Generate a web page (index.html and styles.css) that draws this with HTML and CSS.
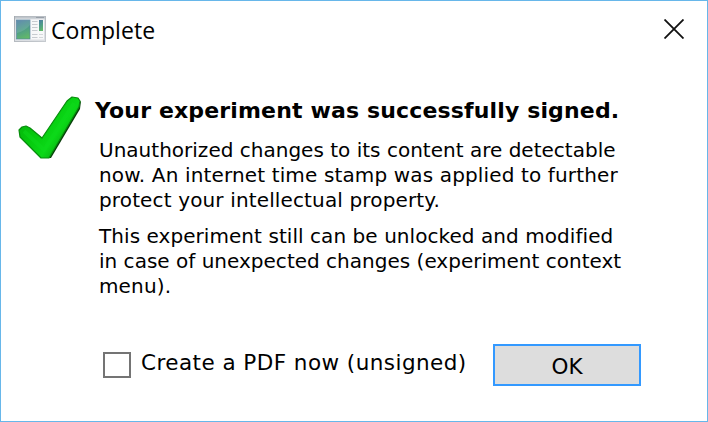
FILE: index.html
```html
<!DOCTYPE html>
<html lang="en">
<head>
<meta charset="utf-8">
<title>Complete</title>
<link rel="stylesheet" href="styles.css">
</head>
<body>
<main class="dialog">
  <header class="titlebar">
    <svg class="app-icon" viewBox="0 0 32 26" aria-hidden="true">
      <defs>
        <linearGradient id="frame" x1="0" y1="0" x2="1" y2="1"><stop offset="0" stop-color="#a4aab0"/><stop offset="1" stop-color="#c6cacf"/></linearGradient>
        <linearGradient id="pane" x1="0.3" y1="0" x2="0.6" y2="1"><stop offset="0" stop-color="#4c7fa0"/><stop offset="0.5" stop-color="#4f9d88"/><stop offset="1" stop-color="#62b968"/></linearGradient>
      </defs>
      <rect x="0.5" y="0.5" width="31" height="25" fill="#dcdfe3" stroke="url(#frame)"/>
      <path d="M1 1.5H31" stroke="#bfc5cb" stroke-width="2"/>
      <path d="M22 1.5H30" stroke="#989fa8"/>
      <rect x="2" y="3.500" width="28" height="20" fill="#f7f8f9"/>
      <rect x="2.500" y="4" width="13.500" height="19" fill="url(#pane)" stroke="#5785a0" stroke-width="0.700"/>
      <path d="M3 17Q11 15 16 9V4H3Z" fill="#fff" opacity="0.120"/>
      <path d="M18 5.500H23.500M18 8.500H23.500M18 11.500H23.500M18 14.500H23.500M18 18.500H23.500M18 21.500H23.500" stroke="#c7cbd0"/>
      <rect x="25" y="4" width="4" height="11" fill="url(#pane)"/>
      <path d="M25 18.500H29M25 21.500H29" stroke="#d5d8db"/>
    </svg>
    <h1 class="caption">Complete</h1>
    <svg class="close" viewBox="0 0 20 20" role="img" aria-label="Close"><path d="M0.500 0.500L19.500 19.500M19.500 0.500L0.500 19.500" stroke="#111" stroke-width="1.800"/></svg>
  </header>
  <section class="content">
    <svg class="check" viewBox="0 0 64 64" aria-hidden="true">
      <defs><linearGradient id="green" x1="0" y1="0" x2="1" y2="0.700"><stop offset="0" stop-color="#07a60b"/><stop offset="0.450" stop-color="#05c90d"/><stop offset="0.700" stop-color="#0bd817"/><stop offset="1" stop-color="#078f0d"/></linearGradient></defs>
      <path d="M63 5L62 13L33 62H28L60 7Z" fill="#063d08"/>
      <path d="M1 34L4 31L8 30L12 32L24 42L49 5L54 1L60 2L62 5L61 11L31 62H23L2 41Z" fill="url(#green)" stroke="#078d0c" stroke-width="1.200" stroke-linejoin="round"/>
      <path d="M6 35L26 54L56 7" fill="none" stroke="#10dd1d" stroke-width="4" stroke-linejoin="round" opacity="0.400"/>
    </svg>
    <div class="message">
      <h2 class="heading">Your experiment was successfully signed.</h2>
      <p class="paragraph">
        <span class="line">Unauthorized changes to its content are detectable</span>
        <span class="line wide">now. An internet time stamp was applied to further</span>
        <span class="line wide">protect your intellectual property.</span>
      </p>
      <p class="paragraph">
        <span class="line medium">This experiment still can be unlocked and modified</span>
        <span class="line">in case of unexpected changes (experiment context</span>
        <span class="line wide">menu).</span>
      </p>
    </div>
  </section>
  <footer class="actions">
    <label class="option"><input class="box" type="checkbox"><span class="option-text">Create a PDF now (unsigned)</span></label>
    <button class="ok" type="button">OK</button>
  </footer>
</main>
</body>
</html>
```
FILE: styles.css
```css
* { box-sizing: border-box; }
body { margin: 0; background: #fff; color: #000; font-family: "DejaVu Sans", Verdana, sans-serif; }
.dialog { width: 708px; height: 422px; border: 1px solid #67b7ea; display: flex; flex-direction: column; }
.titlebar { height: 59px; padding: 0 23px 0 13px; display: flex; align-items: center; }
.app-icon { width: 32px; height: 26px; margin-top: -4px; }
.caption { margin: -2px auto 0 5px; font: 400 23px/30px "Open Sans", sans-serif; letter-spacing: 0.1px; }
.close { width: 20px; height: 20px; margin-top: -3px; }
.content { height: 281px; padding: 36px 0 0 17px; display: flex; align-items: flex-start; }
.check { width: 64px; height: 64px; flex: none; }
.message { margin-left: 13px; white-space: nowrap; }
.heading { margin: 0 0 12px; font-size: 22px; line-height: 30px; font-weight: 700; letter-spacing: 0.15px; }
.paragraph { margin: 0 0 11px 4px; font-size: 20px; line-height: 25px; font-variant-ligatures: none; }
.line { display: block; letter-spacing: 0.01px; }
.medium { letter-spacing: 0.06px; }
.wide { letter-spacing: 0.14px; }
.actions { padding: 3px 66px 0 102px; display: flex; justify-content: space-between; align-items: flex-start; }
.option { display: flex; gap: 10px; margin-top: 4px; white-space: nowrap; }
.box { appearance: none; width: 28px; height: 26px; margin: 4px 0 0; border: 2px solid #747474; background: #fff; }
.option-text { font-size: 21.5px; line-height: 30px; letter-spacing: 0.45px; }
.ok { width: 148px; height: 42px; padding: 2px 0 0; border: 2px solid #3399ff; background: #ddd; color: #000; font: 21.5px "DejaVu Sans", Verdana, sans-serif; }
```
